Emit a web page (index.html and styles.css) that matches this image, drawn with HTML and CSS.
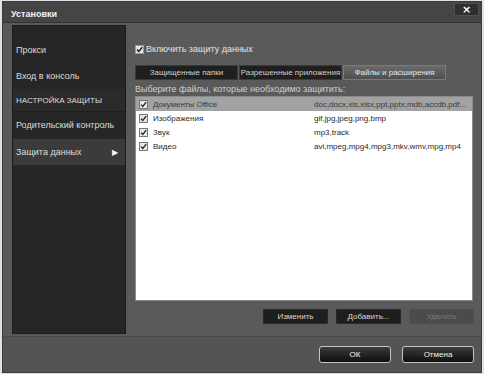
FILE: index.html
```html
<!DOCTYPE html>
<html lang="ru">
<head>
    <meta charset="UTF-8">
    <title>Установки</title>
    <link rel="stylesheet" href="styles.css">
</head>
<body>
    <div class="window">
        <div class="titlebar">
            <span class="title">Установки</span>
            <button class="close-button">&#215;</button>
        </div>

        <div class="dialog-body">
            <!-- Left menu -->
            <div class="sidebar">
                <div class="menu-item">Прокси</div>
                <div class="menu-item">Вход в консоль</div>
                <div class="menu-item menu-header">НАСТРОЙКА ЗАЩИТЫ</div>
                <div class="menu-item">Родительский контроль</div>
                <div class="menu-item menu-active">Защита данных <span class="arrow">&#9654;</span></div>
            </div>

            <!-- Settings panel -->
            <div class="main-panel">
                <label class="enable-row">
                    <svg class="check" width="9" height="9" viewBox="0 0 9 9"><rect x="0.5" y="0.5" width="8" height="8" fill="#e4e4e4" stroke="#9a9a9a"/><path d="M2 4.6 L3.8 6.5 L7.2 2.2" fill="none" stroke="#1a1a1a" stroke-width="1.4"/></svg>
                    Включить защиту данных
                </label>

                <div class="tabs">
                    <div class="tab">Защищенные папки</div>
                    <div class="tab">Разрешенные приложения</div>
                    <div class="tab tab-active">Файлы и расширения</div>
                </div>

                <div class="hint">Выберите файлы, которые необходимо защитить:</div>

                <div class="file-list">
                    <div class="file-row selected">
                        <svg class="check" width="9" height="9" viewBox="0 0 9 9"><rect x="0.5" y="0.5" width="8" height="8" fill="#e8e8e8" stroke="#777"/><path d="M2 4.6 L3.8 6.5 L7.2 2.2" fill="none" stroke="#222" stroke-width="1.3"/></svg>
                        <span class="file-name">Документы Office</span>
                        <span class="file-ext">doc,docx,xls,xlsx,ppt,pptx,mdb,accdb,pdf...</span>
                    </div>
                    <div class="file-row">
                        <svg class="check" width="9" height="9" viewBox="0 0 9 9"><rect x="0.5" y="0.5" width="8" height="8" fill="#e8e8e8" stroke="#777"/><path d="M2 4.6 L3.8 6.5 L7.2 2.2" fill="none" stroke="#222" stroke-width="1.3"/></svg>
                        <span class="file-name">Изображения</span>
                        <span class="file-ext">gif,jpg,jpeg,png,bmp</span>
                    </div>
                    <div class="file-row">
                        <svg class="check" width="9" height="9" viewBox="0 0 9 9"><rect x="0.5" y="0.5" width="8" height="8" fill="#e8e8e8" stroke="#777"/><path d="M2 4.6 L3.8 6.5 L7.2 2.2" fill="none" stroke="#222" stroke-width="1.3"/></svg>
                        <span class="file-name">Звук</span>
                        <span class="file-ext">mp3,track</span>
                    </div>
                    <div class="file-row">
                        <svg class="check" width="9" height="9" viewBox="0 0 9 9"><rect x="0.5" y="0.5" width="8" height="8" fill="#e8e8e8" stroke="#777"/><path d="M2 4.6 L3.8 6.5 L7.2 2.2" fill="none" stroke="#222" stroke-width="1.3"/></svg>
                        <span class="file-name">Видео</span>
                        <span class="file-ext">avi,mpeg,mpg4,mpg3,mkv,wmv,mpg,mp4</span>
                    </div>
                </div>

                <div class="list-buttons">
                    <button class="flat-button">Изменить</button>
                    <button class="flat-button">Добавить...</button>
                    <button class="flat-button disabled">Удалить</button>
                </div>
            </div>
        </div>

        <div class="footer">
            <button class="dialog-button">ОК</button>
            <button class="dialog-button">Отмена</button>
        </div>
    </div>
</body>
</html>
```

FILE: styles.css
```css
* {
    box-sizing: border-box;
    margin: 0;
    padding: 0;
}

body {
    font-family: 'Liberation Sans', Arial, sans-serif;
    font-size: 9px;
    background-color: #e2e2e2;
    color: #e6e6e6;
}

.window {
    width: 480px;
    height: 372px;
    margin: 1px 0 0 2px;
    border: 1px solid #3a3a3a;
    background-color: #5a5a5a;
    display: flex;
    flex-direction: column;
}

.titlebar {
    height: 21px;
    background-color: #454545;
    border-bottom: 1px solid #333;
    display: flex;
    align-items: flex-start;
    justify-content: space-between;
    padding: 1px 2px 0 8px;
}

.title {
    margin-top: 6px;
    font-weight: bold;
    font-size: 9px;
    color: #f2f2f2;
}

.close-button {
    width: 25px;
    height: 13px;
    background-color: #2f2f2f;
    border: 1px solid #505050;
    color: #fff;
    font-weight: bold;
    font-size: 11px;
    line-height: 10px;
    font-family: 'DejaVu Sans', sans-serif;
}

.dialog-body {
    height: 313px;
    display: flex;
    padding: 2px 6px 2px 9px;
}

.sidebar {
    width: 114px;
    height: 309px;
    background-color: #262626;
    border: 1px solid #1b1b1b;
    padding-top: 11px;
}

.menu-item {
    height: 26px;
    display: flex;
    align-items: center;
    justify-content: space-between;
    padding: 0 7px 0 3px;
    color: #dcdcdc;
    font-size: 9px;
}

.menu-header {
    height: 23px;
    font-size: 8px;
    background-color: #2b2b2b;
    border-bottom: 1px solid #1f1f1f;
}

.menu-active {
    background-color: #3b3b3b;
    margin-top: 1px;
}

.arrow {
    font-size: 8px;
    color: #f4f4f4;
}

.main-panel {
    flex: 1;
    padding: 17px 0 0 9px;
}

.enable-row {
    height: 14px;
    display: flex;
    align-items: center;
    gap: 2px;
    color: #e4e4e4;
    font-size: 9px;
}

.tabs {
    display: flex;
    gap: 1px;
    margin-top: 9px;
    height: 15px;
}

.tab {
    width: 103px;
    background-color: #1f1f1f;
    border: 1px solid #3a3a3a;
    color: #d0d0d0;
    font-size: 8px;
    display: flex;
    align-items: center;
    justify-content: center;
}

.tab-active {
    background: linear-gradient(#6b6b6b, #4f4f4f);
    border-color: #7a7a7a;
    color: #e8e8e8;
}

.hint {
    margin-top: 3px;
    height: 12px;
    line-height: 12px;
    color: #cfcfcf;
    font-size: 9px;
}

.file-list {
    margin-top: 1px;
    width: 338px;
    height: 205px;
    background-color: #fff;
    border: 1px solid #8a8a8a;
    color: #2a2a2a;
    font-size: 8px;
}

.file-row {
    height: 14px;
    display: flex;
    align-items: center;
    padding-left: 3px;
    gap: 5px;
}

.file-row.selected {
    background-color: #a2a2a2;
    color: #3a3a3a;
}

.file-name {
    width: 156px;
}

.file-ext {
    flex: 1;
    white-space: nowrap;
}

.list-buttons {
    margin-top: 8px;
    display: flex;
    justify-content: flex-end;
    gap: 8px;
    width: 339px;
}

.flat-button {
    width: 65px;
    height: 15px;
    background-color: #1e1e1e;
    border: 1px solid #2a2a2a;
    color: #d8d8d8;
    font-family: 'Liberation Sans', Arial, sans-serif;
    font-size: 8px;
}

.flat-button.disabled {
    background-color: #4b4b4b;
    border-color: #505050;
    color: #7a7a7a;
}

.footer {
    flex: 1;
    background-color: #545454;
    border-top: 1px solid #4a4a4a;
    display: flex;
    justify-content: flex-end;
    align-items: center;
    gap: 11px;
    padding: 0 7px 1px 0;
}

.dialog-button {
    width: 72px;
    height: 17px;
    border: 1px solid #c4c4c4;
    border-radius: 3px;
    background: linear-gradient(#3c3c3c, #0e0e0e);
    color: #f2f2f2;
    font-family: 'Liberation Sans', Arial, sans-serif;
    font-size: 8px;
}
```
